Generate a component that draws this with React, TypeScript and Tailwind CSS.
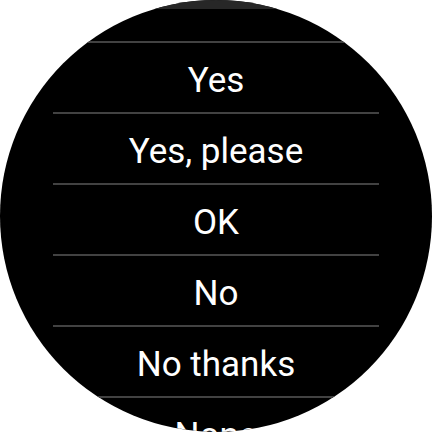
const options = ['Yes', 'Yes, please', 'OK', 'No', 'No thanks', 'None'];

export default function App() {
  return (
    <div className="flex h-[432px] w-[432px] bg-white">
      <div
        className="flex h-[432px] w-[432px] flex-col overflow-hidden rounded-full bg-black text-white"
        style={{ fontFamily: 'Roboto, "Noto Sans", sans-serif' }}
      >
        <div className="h-[9px] shrink-0 bg-[#272727]" />
        <div className="h-[32px] shrink-0" />
        {options.map((label) => (
          <div key={label} className="flex shrink-0 flex-col">
            <div className="mx-[53px] h-[2px] bg-[#424242]" />
            <div className="flex h-[69px] items-center justify-center pt-[5px] text-[35px] leading-none">
              {label}
            </div>
          </div>
        ))}
      </div>
    </div>
  );
}
